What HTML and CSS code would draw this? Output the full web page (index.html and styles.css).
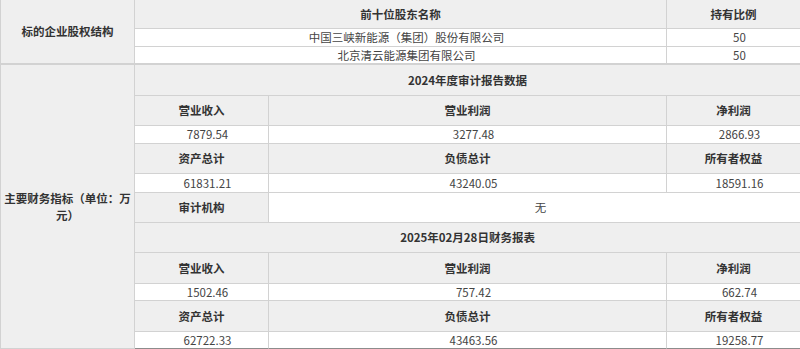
FILE: index.html
```html
<!DOCTYPE html>
<html lang="zh-CN">
<head>
<meta charset="utf-8">
<link rel="stylesheet" href="styles.css">
</head>
<body>
<table class="grid">
  <colgroup><col class="c1"><col class="c2"><col class="c3"><col class="c4"></colgroup>
  <tr class="r29">
    <td class="lbl" rowspan="3">标的企业股权结构</td>
    <td class="hd" colspan="2">前十位股东名称</td>
    <td class="hd">持有比例</td>
  </tr>
  <tr class="r18">
    <td class="val" colspan="2">中国三峡新能源（集团）股份有限公司</td>
    <td class="val">50</td>
  </tr>
  <tr class="r17">
    <td class="val" colspan="2">北京清云能源集团有限公司</td>
    <td class="val">50</td>
  </tr>
</table>
<table class="grid second">
  <colgroup><col class="c1"><col class="c2"><col class="c3"><col class="c4"></colgroup>
  <tr class="r31">
    <td class="lbl" rowspan="11">主要财务指标（单位：万元）</td>
    <td class="hd" colspan="3">2024年度审计报告数据</td>
  </tr>
  <tr class="r30">
    <td class="hd">营业收入</td><td class="hd">营业利润</td><td class="hd">净利润</td>
  </tr>
  <tr class="r18">
    <td class="val">7879.54</td><td class="val">3277.48</td><td class="val">2866.93</td>
  </tr>
  <tr class="r30">
    <td class="hd">资产总计</td><td class="hd">负债总计</td><td class="hd">所有者权益</td>
  </tr>
  <tr class="r19">
    <td class="val">61831.21</td><td class="val">43240.05</td><td class="val">18591.16</td>
  </tr>
  <tr class="r30">
    <td class="hd">审计机构</td><td class="val" colspan="2">无</td>
  </tr>
  <tr class="r30">
    <td class="hd" colspan="3">2025年02月28日财务报表</td>
  </tr>
  <tr class="r31">
    <td class="hd">营业收入</td><td class="hd">营业利润</td><td class="hd">净利润</td>
  </tr>
  <tr class="r17">
    <td class="val">1502.46</td><td class="val">757.42</td><td class="val">662.74</td>
  </tr>
  <tr class="r31">
    <td class="hd">资产总计</td><td class="hd">负债总计</td><td class="hd">所有者权益</td>
  </tr>
  <tr class="r17 last">
    <td class="val">62722.33</td><td class="val">43463.56</td><td class="val">19258.77</td>
  </tr>
</table>
</body>
</html>
```
FILE: styles.css
```css
html, body {
  margin: 0;
  padding: 0;
  background: #ffffff;
}
body {
  width: 800px;
  overflow: hidden;
  font-family: "Noto Sans CJK SC", "Noto Sans", sans-serif;
  font-size: 11.5px;
  color: #333;
}
.grid {
  width: 800px;
  table-layout: fixed;
  border-collapse: separate;
  border-spacing: 0;
  border-left: 1px solid #d2d2d2;
}
.second {
  border-top: 1px solid #d2d2d2;
}
.c1 { width: 134px; }
.c2 { width: 134px; }
.c3 { width: 398px; }
.c4 { width: 133px; }
.grid td {
  padding: 0;
  border-right: 1px solid #d2d2d2;
  border-bottom: 1px solid #d2d2d2;
  text-align: center;
  vertical-align: middle;
  line-height: 15px;
  background: #efefef;
}
.grid td:last-child { border-right: none; }
.grid td.lbl {
  font-weight: bold;
  padding: 0 3px;
  line-height: 17px;
}
.hd { font-weight: bold; }
.grid td.val {
  background: #ffffff;
  color: #444;
  padding-left: 12px;
}
.r17 { height: 17px; }
.r18 { height: 18px; }
.r19 { height: 19px; }
.r29 { height: 29px; }
.r30 { height: 30px; }
.r31 { height: 31px; }
.last td { border-bottom-color: #8c8c8c; }
```
